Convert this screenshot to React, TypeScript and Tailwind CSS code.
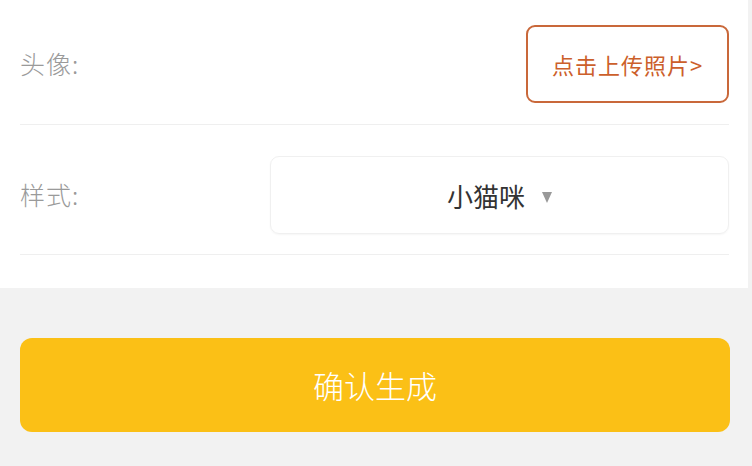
import React from 'react';

const font = { fontFamily: '"Noto Sans CJK SC", "Noto Sans", sans-serif' };

const App: React.FC = () => {
  return (
    <div className="w-[752px] h-[466px] flex flex-col bg-[#f2f2f2]" style={font}>
      <div className="bg-white pl-5 pr-[19px] h-[288px] w-[748px]">
        {/* avatar row */}
        <div className="flex items-center justify-between pt-[25px] pb-[21px] border-b border-[#efefef]">
          <span className="text-[25px] text-[#9a9a9a] font-light tracking-[1px]">头像:</span>
          <button className="w-[203px] h-[78px] rounded-[9px] border-2 border-[#c9683a] text-[22px] text-[#cc5f2b] tracking-[1px]">
            点击上传照片&gt;
          </button>
        </div>

        {/* style row */}
        <div className="flex items-center pt-[31px] pb-[20px] border-b border-[#efefef]">
          <span className="w-[250px] text-[25px] text-[#9a9a9a] font-light tracking-[1px]">样式:</span>
          <div className="w-[459px] h-[78px] rounded-[9px] border border-[#f0f0f0] shadow-[0_1px_2px_rgba(0,0,0,0.04)] flex items-center justify-center">
            <span className="text-[26px] text-[#333333]">小猫咪</span>
            <span className="ml-[17px] mt-[4px] w-0 h-0 border-l-[5px] border-r-[5px] border-t-[11px] border-l-transparent border-r-transparent border-t-[#999999]" />
          </div>
        </div>
      </div>

      <div className="pl-5 pt-[50px]">
        <button className="w-[710px] h-[94px] rounded-[12px] bg-[#fbc016] text-white text-[31px] font-light">
          确认生成
        </button>
      </div>
    </div>
  );
};

export default App;
